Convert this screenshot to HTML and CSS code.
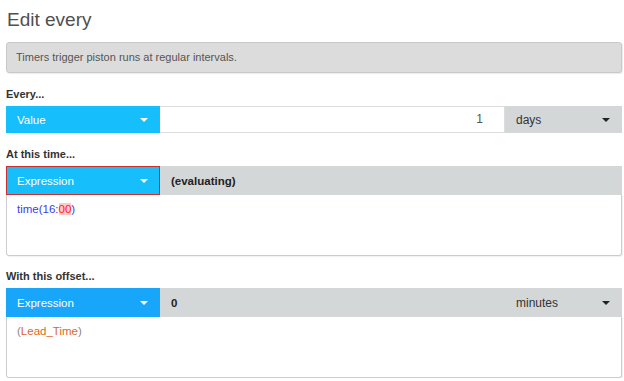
FILE: index.html
```html
<!DOCTYPE html>
<html lang="en">
<head>
    <meta charset="UTF-8">
    <meta name="viewport" content="width=device-width, initial-scale=1.0">
    <title>Edit every</title>
    <link rel="stylesheet" href="styles.css">
</head>
<body>
    <div class="dialog">
        <h1 class="title">Edit every</h1>
        <div class="info">Timers trigger piston runs at regular intervals.</div>

        <label class="field-label">Every...</label>
        <div class="row row-short">
            <div class="type-btn cyan">Value <span class="caret white"></span></div>
            <div class="number-input">1</div>
            <div class="unit-select">days <span class="caret"></span></div>
        </div>

        <label class="field-label">At this time...</label>
        <div class="row">
            <div class="type-btn cyan invalid">Expression <span class="caret white"></span></div>
            <div class="gray-cell"><b>(evaluating)</b></div>
        </div>
        <div class="expr-box">
            <span class="fn">time(16:<span class="err">00</span>)</span>
        </div>

        <label class="field-label tight">With this offset...</label>
        <div class="row">
            <div class="type-btn blue">Expression <span class="caret white"></span></div>
            <div class="gray-cell"><b>0</b></div>
            <div class="unit-select">minutes <span class="caret"></span></div>
        </div>
        <div class="expr-box">
            <span class="paren">(</span><span class="var">Lead_Time</span><span class="paren">)</span>
        </div>
    </div>
</body>
</html>
```

FILE: styles.css
```css
body{
    margin: 0;
    background-color: #fff;
    font-family: "Liberation Sans", Arial, sans-serif;
    color: #333;
}
.dialog{
    padding: 0 2px 0 6px;
}
.title{
    margin: 0;
    padding: 8px 0 0 1px;
    height: 42px;
    box-sizing: border-box;
    font-size: 19px;
    font-weight: normal;
    line-height: 23px;
    color: #505050;
}
.info{
    height: 31px;
    box-sizing: border-box;
    margin-bottom: 1px;
    background-color: #dcdcdc;
    border: 1px solid #c9c9c9;
    border-radius: 3px;
    box-shadow: 1px 1px 1px rgba(0,0,0,0.08);
    padding: 0 9px;
    font-size: 11px;
    line-height: 29px;
    color: #555;
}
.field-label{
    display: block;
    margin: 13px 0 4px;
    line-height: 16px;
    font-size: 11px;
    font-weight: bold;
    color: #333;
}
.field-label.tight{
    margin-top: 12px;
}
.row{
    display: flex;
    height: 29px;
    font-size: 12px;
}
.row-short{
    height: 27px;
}
.type-btn{
    position: relative;
    width: 154px;
    box-sizing: border-box;
    padding-left: 11px;
    display: flex;
    align-items: center;
    font-size: 11.5px;
    color: #fff;
}
.cyan{
    background-color: #16befb;
}
.blue{
    background-color: #18a6fb;
}
.invalid{
    border: 1px solid #c9302c;
    padding-left: 10px;
}
.caret{
    position: absolute;
    right: 12px;
    top: 50%;
    margin-top: -2px;
    width: 0;
    height: 0;
    border-left: 4px solid transparent;
    border-right: 4px solid transparent;
    border-top: 4px solid #222;
}
.caret.white{
    border-top-color: #fff;
}
.invalid .caret{
    right: 11px;
}
.number-input{
    flex: 1;
    box-sizing: border-box;
    border: 1px solid #ddd;
    border-left: none;
    background: #fff;
    text-align: right;
    padding-right: 21px;
    line-height: 25px;
    color: #555;
}
.unit-select{
    position: relative;
    width: 117px;
    box-sizing: border-box;
    background-color: #d3d7d8;
    padding-left: 11px;
    display: flex;
    align-items: center;
    color: #333;
}
.gray-cell{
    flex: 1;
    background-color: #d3d7d8;
    padding-left: 11px;
    display: flex;
    align-items: center;
    font-size: 11.5px;
    color: #222;
}
.expr-box{
    height: 61px;
    box-sizing: border-box;
    border: 1px solid #ccc;
    border-top: none;
    border-radius: 0 0 3px 3px;
    box-shadow: 1px 1px 1px rgba(0,0,0,0.06);
    padding: 6px 10px;
    font-size: 11.5px;
    line-height: 16px;
}
.fn{
    color: #3b3bf0;
}
.err{
    color: #ff2020;
    background-color: #ffc8c8;
}
.paren{
    color: #888;
}
.var{
    color: #e0662a;
}
```
